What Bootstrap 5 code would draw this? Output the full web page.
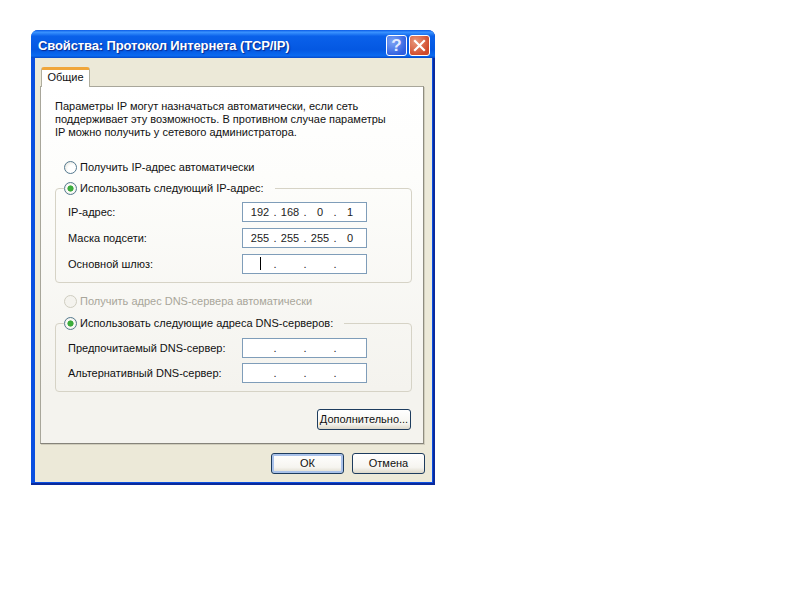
<!DOCTYPE html>
<html lang="ru">
<head>
<meta charset="utf-8">
<title>Свойства: Протокол Интернета (TCP/IP)</title>
<link href="https://cdn.jsdelivr.net/npm/bootstrap@5.3.0/dist/css/bootstrap.min.css" rel="stylesheet">
<style>
body{background:#fff;margin:0;font-family:"Liberation Sans",Arial,sans-serif;font-size:11px;line-height:13px;color:#111}
.xp-win{margin:30px 0 0 31px;width:404px;height:455px;background:#0a4fe0;border-radius:7px 7px 0 0;box-shadow:inset -2px -2px 0 #0a2a9c}
.xp-title{height:28px;padding:2px 5px 0 7px;border-radius:7px 7px 0 0;background:linear-gradient(#0a5ae6 0,#3a93ff 8%,#0a61ea 22%,#0458e2 70%,#0a6af0 92%,#0548c8 100%)}
.xp-title-text{font-size:13px;font-weight:700;letter-spacing:-.12px;color:#fff;text-shadow:1px 1px 1px #0a2a90;white-space:nowrap}
.xp-cap{width:21px;height:21px;border:1px solid #fff;border-radius:3px;font:700 17px/19px "Liberation Sans",sans-serif;color:#e4ecff;text-align:center}
.xp-help{background:radial-gradient(circle at 30% 30%,#7ea5f5,#2f5fe0 75%);margin-right:2px}
.xp-close{background:radial-gradient(circle at 30% 30%,#e9987c,#d0492a 75%)}
.xp-dialog{height:424px;margin:0 3px 0 4px;background:#ece9d8;padding:9px 8px 0 5px}
.xp-tab{margin-left:1px;width:49px;height:20px;background:#fff;border:1px solid #b0ae9e;border-bottom:0;border-top:3px solid #f0a63a;border-radius:3px 3px 0 0;text-align:center;line-height:15px;position:relative;z-index:1;margin-bottom:-1px;font-size:11px}
.xp-panel{height:358px;border:1px solid #a8a69a;border-right-color:#8f8d80;border-bottom-color:#85837a;background:linear-gradient(#fff 0,#fdfdfb 25%,#f4f3ee 85%);padding:13px 12px 0 14px;box-shadow:1px 1px 0 #d0cdbc}
.xp-intro{margin:0 0 21px;height:39px;white-space:nowrap}
.xp-rowr{height:14px;padding-left:9px;gap:3px;white-space:nowrap}
.xp-rowr-off{margin-top:11px}
.xp-radio{appearance:none;-webkit-appearance:none;width:13px;height:13px;margin:0;flex:none;border:1px solid #54798f;border-radius:50%;background:radial-gradient(circle at 65% 65%,#fff 40%,#dcdcd2 100%)}
.xp-radio:checked{background:radial-gradient(circle closest-side,#3fb33f 0,#3aa83a 50%,#fff 62%,#f0efe8 100%)}
.xp-radio:disabled{border-color:#cfcdc0;background:#f4f3ee}
.xp-muted{color:#a8a69a}
.xp-group{border:1px solid #d6d3c6;border-radius:4px;margin:0;padding:0 0 8px 12px;width:357px;min-width:0;margin-top:7px}
.xp-group-dns{margin-top:8px}
.xp-legend{float:none;width:auto;margin:0 0 0 -4px;padding:0 11px 0 0;font-size:11px;line-height:14px;display:flex;align-items:center;gap:3px;height:14px;background:transparent}
.xp-field{height:20px}
.xp-fields-a{padding-top:7px;gap:6px}
.xp-fields-b{padding-top:8px;gap:5px}
.xp-ip{margin-left:auto;margin-right:44px;width:125px;height:20px;border:1px solid #7f9db9;background:#fff;padding-left:4px;color:#222}
.xp-oct{width:30px}
.xp-num{width:26px;text-align:center;line-height:18px;position:relative;font-size:11px}
.xp-dot{width:4px;text-align:center;line-height:18px}
.xp-caret{display:inline-block;width:1px;height:13px;background:#000;vertical-align:-2px}
.xp-btn{--bs-btn-padding-x:0;--bs-btn-padding-y:0;--bs-btn-font-size:11px;--bs-btn-line-height:19px;--bs-btn-border-radius:3px;--bs-btn-color:#111;--bs-btn-border-color:#003c74;--bs-btn-bg:#f4f3ee;font-family:"Liberation Sans",sans-serif;border-color:#1d3c5e;background:linear-gradient(#fff,#f6f5f0 70%,#dcd8ca);color:#111}
.xp-more-row{margin-top:17px;width:356px}
.xp-foot-row{gap:8px;margin:9px -1px 0 0}
.xp-more{width:94px;height:21px}
.xp-foot{width:73px;height:21px}
.xp-default{box-shadow:inset 0 0 0 2px #a9c2ea}
</style>
</head>
<body>
<div class="xp-win">
  <div class="xp-title d-flex align-items-center">
    <div class="xp-title-text flex-grow-1">Свойства: Протокол Интернета (TCP/IP)</div>
    <div class="xp-cap xp-help">?</div>
    <div class="xp-cap xp-close d-flex align-items-center justify-content-center">
      <svg width="13" height="13" viewBox="0 0 13 13"><path d="M2 2L11 11M11 2L2 11" stroke="#fff" stroke-width="2.2" stroke-linecap="square"/></svg>
    </div>
  </div>
  <div class="xp-dialog">
    <div class="xp-tab">Общие</div>
    <div class="xp-panel">
      <p class="xp-intro">Параметры IP могут назначаться автоматически, если сеть<br>поддерживает эту возможность. В противном случае параметры<br>IP можно получить у сетевого администратора.</p>
      <label class="xp-rowr d-flex align-items-center"><input class="xp-radio" type="radio" name="ip">Получить IP-адрес автоматически</label>
      <fieldset class="xp-group">
        <legend class="xp-legend"><input class="xp-radio" type="radio" name="ip" checked>Использовать следующий IP-адрес:</legend>
        <div class="xp-fields-a d-flex flex-column">
          <div class="xp-field d-flex align-items-center">IP-адрес:<div class="xp-ip d-flex"><div class="xp-oct d-flex"><span class="xp-num">192</span><span class="xp-dot">.</span></div><div class="xp-oct d-flex"><span class="xp-num">168</span><span class="xp-dot">.</span></div><div class="xp-oct d-flex"><span class="xp-num">0</span><span class="xp-dot">.</span></div><div class="xp-oct d-flex"><span class="xp-num">1</span></div></div></div>
          <div class="xp-field d-flex align-items-center">Маска подсети:<div class="xp-ip d-flex"><div class="xp-oct d-flex"><span class="xp-num">255</span><span class="xp-dot">.</span></div><div class="xp-oct d-flex"><span class="xp-num">255</span><span class="xp-dot">.</span></div><div class="xp-oct d-flex"><span class="xp-num">255</span><span class="xp-dot">.</span></div><div class="xp-oct d-flex"><span class="xp-num">0</span></div></div></div>
          <div class="xp-field d-flex align-items-center">Основной шлюз:<div class="xp-ip d-flex"><div class="xp-oct d-flex"><span class="xp-num"><i class="xp-caret"></i></span><span class="xp-dot">.</span></div><div class="xp-oct d-flex"><span class="xp-num"></span><span class="xp-dot">.</span></div><div class="xp-oct d-flex"><span class="xp-num"></span><span class="xp-dot">.</span></div><div class="xp-oct d-flex"><span class="xp-num"></span></div></div></div>
        </div>
      </fieldset>
      <label class="xp-rowr xp-rowr-off xp-muted d-flex align-items-center"><input class="xp-radio" type="radio" name="dns" disabled>Получить адрес DNS-сервера автоматически</label>
      <fieldset class="xp-group xp-group-dns">
        <legend class="xp-legend"><input class="xp-radio" type="radio" name="dns" checked>Использовать следующие адреса DNS-серверов:</legend>
        <div class="xp-fields-b d-flex flex-column">
          <div class="xp-field d-flex align-items-center">Предпочитаемый DNS-сервер:<div class="xp-ip d-flex"><div class="xp-oct d-flex"><span class="xp-num"></span><span class="xp-dot">.</span></div><div class="xp-oct d-flex"><span class="xp-num"></span><span class="xp-dot">.</span></div><div class="xp-oct d-flex"><span class="xp-num"></span><span class="xp-dot">.</span></div><div class="xp-oct d-flex"><span class="xp-num"></span></div></div></div>
          <div class="xp-field d-flex align-items-center">Альтернативный DNS-сервер:<div class="xp-ip d-flex"><div class="xp-oct d-flex"><span class="xp-num"></span><span class="xp-dot">.</span></div><div class="xp-oct d-flex"><span class="xp-num"></span><span class="xp-dot">.</span></div><div class="xp-oct d-flex"><span class="xp-num"></span><span class="xp-dot">.</span></div><div class="xp-oct d-flex"><span class="xp-num"></span></div></div></div>
        </div>
      </fieldset>
      <div class="xp-more-row d-flex justify-content-end"><button type="button" class="btn xp-btn xp-more">Дополнительно...</button></div>
    </div>
    <div class="xp-foot-row d-flex justify-content-end"><button type="button" class="btn xp-btn xp-foot xp-default">ОК</button><button type="button" class="btn xp-btn xp-foot">Отмена</button></div>
  </div>
</div>
<script src="https://cdn.jsdelivr.net/npm/bootstrap@5.3.0/dist/js/bootstrap.bundle.min.js"></script>
</body>
</html>
